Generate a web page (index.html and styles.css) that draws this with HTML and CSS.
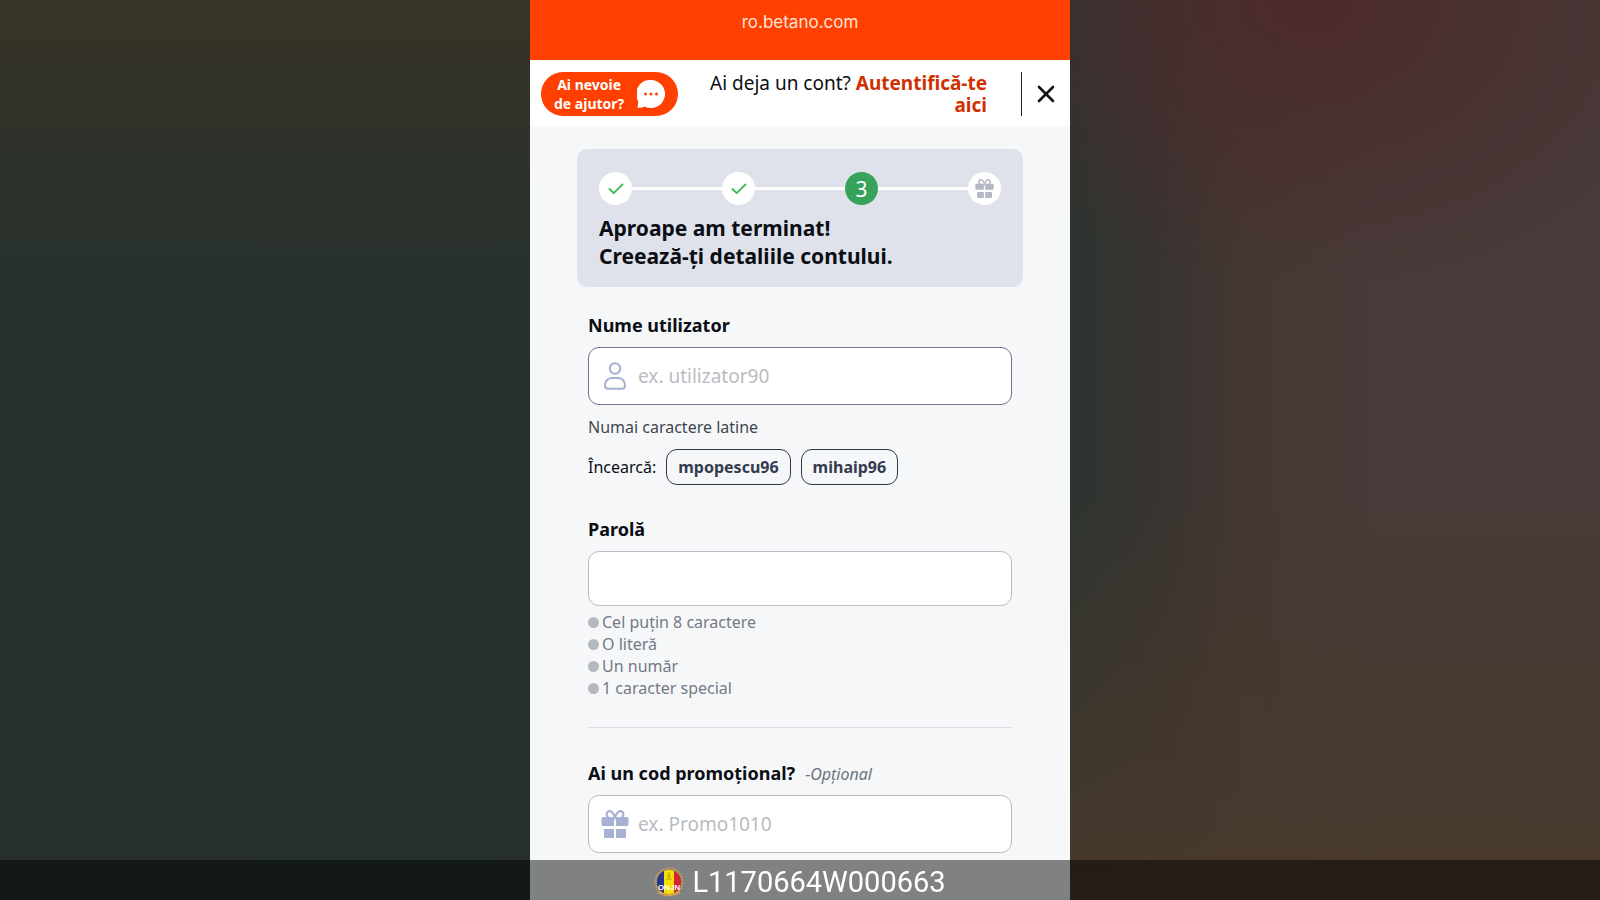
FILE: index.html
```html
<!DOCTYPE html>
<html lang="ro">
<head>
<meta charset="utf-8">
<meta name="viewport" content="width=device-width, initial-scale=1">
<title>Creează cont</title>
<link rel="stylesheet" href="styles.css">
</head>
<body>
<svg class="sprite" aria-hidden="true">
  <symbol id="gift" viewBox="0 0 28 28">
    <path d="M7 7.500C3.500 2.500 8-.500 11 2.200c1.300 1.200 2.400 3 3 5 .6-2 1.700-3.800 3-5C20-.500 24.500 2.500 21 7.500" fill="none" stroke="currentColor" stroke-width="2.200"/>
    <path d="M2 7h11v9H2a1.500 1.500 0 0 1-1.500-1.500v-6A1.500 1.500 0 0 1 2 7zM15 7h11a1.500 1.500 0 0 1 1.500 1.500v6A1.500 1.500 0 0 1 26 16H15zM3 19h10v9H4.500A1.500 1.500 0 0 1 3 26.500zM15 19h10v7.500a1.500 1.500 0 0 1-1.500 1.500H15z" fill="currentColor"/>
  </symbol>
  <symbol id="check" viewBox="0 0 16 12">
    <path d="M1.500 6l4.200 4.200L14.500 1.500" fill="none" stroke="currentColor" stroke-width="1.800" stroke-linecap="round" stroke-linejoin="round"/>
  </symbol>
</svg>
<main class="phone">
  <div class="address">ro.betano.com</div>
  <header class="header">
    <button class="help" type="button">
      <span>Ai nevoie<br>de ajutor?</span>
      <svg class="help-icon" viewBox="0 0 28 28" aria-hidden="true">
        <path d="M14 0a14 14 0 1 1-6.500 26.400C5 27.600 2.500 28 .5 27.800c.3-2 .8-4.300.5-7A14 14 0 0 1 14 0z" fill="#fff"/>
        <g fill="#ff4000"><circle cx="8.500" cy="14" r="1.500"/><circle cx="14" cy="14" r="1.500"/><circle cx="19.500" cy="14" r="1.500"/></g>
      </svg>
    </button>
    <p class="login">Ai deja un cont? <a href="#">Autentifică-te aici</a></p>
    <button class="close" type="button" aria-label="Închide">
      <svg viewBox="0 0 18 18" aria-hidden="true"><path d="M2 2l14 14M16 2L2 16" stroke="#111" stroke-width="2.600" stroke-linecap="round"/></svg>
    </button>
  </header>
  <section class="progress">
    <ol class="steps">
      <li class="step"><svg class="check"><use href="#check"/></svg></li>
      <li class="step"><svg class="check"><use href="#check"/></svg></li>
      <li class="step step-current">3</li>
      <li class="step"><svg class="step-gift"><use href="#gift"/></svg></li>
    </ol>
    <h1 class="title">Aproape am terminat!<br>Creează-ți detaliile contului.</h1>
  </section>
  <form class="form">
    <div class="field">
      <label class="label" for="user">Nume utilizator</label>
      <div class="box box-focus">
        <svg class="icon" viewBox="0 0 28 28" aria-hidden="true">
          <g fill="none" stroke="currentColor" stroke-width="2"><circle cx="14" cy="6.500" r="5.200"/><path d="M10.500 16h7c4 0 6.500 3.500 6.500 7.500 0 2-1 3.300-3 3.300H7c-2 0-3-1.300-3-3.300 0-4 2.500-7.500 6.500-7.500z"/></g>
        </svg>
        <input id="user" type="text" placeholder="ex. utilizator90">
      </div>
      <p class="hint">Numai caractere latine</p>
      <div class="suggestions">
        <span>Încearcă:</span>
        <button class="chip" type="button">mpopescu96</button>
        <button class="chip" type="button">mihaip96</button>
      </div>
    </div>
    <div class="field field-password">
      <label class="label" for="pass">Parolă</label>
      <div class="box box-plain"><input id="pass" type="password"></div>
      <ul class="rules">
        <li>Cel puțin 8 caractere</li>
        <li>O literă</li>
        <li>Un număr</li>
        <li>1 caracter special</li>
      </ul>
    </div>
    <div class="field field-promo">
      <div class="label-row">
        <label class="label" for="promo">Ai un cod promoțional?</label>
        <em class="optional">-Opțional</em>
      </div>
      <div class="box">
        <svg class="icon" aria-hidden="true"><use href="#gift"/></svg>
        <input id="promo" type="text" placeholder="ex. Promo1010">
      </div>
    </div>
  </form>
</main>
<footer class="license">
  <svg class="seal" viewBox="0 0 30 30" aria-hidden="true">
    <defs><clipPath id="disc"><circle cx="15" cy="15" r="12"/></clipPath></defs>
    <circle cx="15" cy="15" r="13.500" fill="none" stroke="#c89a4a" stroke-width="2" stroke-dasharray="2 1"/>
    <g clip-path="url(#disc)"><path fill="#24358c" d="M0 0h10v30H0z"/><path fill="#f6e000" d="M10 0h10v30H10z"/><path fill="#d8232e" d="M20 0h10v30H20z"/></g>
    <path d="M15 5v7M12.500 12h5M13 9h4" stroke="#b09a10"/>
    <path d="M4 25q11 6 22 0" fill="none" stroke="#d3a452" stroke-width="2"/>
    <text class="seal-text" x="15" y="23" text-anchor="middle">ONJN</text>
  </svg>
  <span>L1170664W000663</span>
</footer>
</body>
</html>
```
FILE: styles.css
```css
* { box-sizing: border-box; margin: 0; }
body {
  height: 100vh;
  overflow: hidden;
  display: flex;
  justify-content: center;
  font-family: "Noto Sans", sans-serif;
  color: #0b0e14;
  background:
    linear-gradient(#383327, #2c322b 20%, #26302e 38%, #262f2e) 0 0 / 50% 100% no-repeat,
    radial-gradient(ellipse 24% 32% at 82% 0%, #4c292c, transparent),
    linear-gradient(transparent 55%, #48392b) 0 0 / 100% 100% no-repeat,
    linear-gradient(90deg, #2e3430 67%, #393430 73%, #443834 78%, #473a38 86%, #473a38);
}
.sprite { position: absolute; width: 0; height: 0; }
button, input { font: inherit; color: inherit; }
.phone { width: 100%; max-width: 540px; background: #f5f7f9; }
.address {
  height: 60px;
  padding-top: 11px;
  background: #ff4000;
  color: #ffe3d6;
  font: 400 17px/23px Inter, sans-serif;
  text-align: center;
}
.header {
  display: flex;
  align-items: flex-start;
  padding: 12px 15px 10px 11px;
  background: #fff;
}
.help {
  display: flex;
  align-items: center;
  justify-content: space-between;
  width: 137px;
  height: 44px;
  padding: 0 13px;
  border: 0;
  border-radius: 22px;
  background: #ff4000;
  color: #fff;
  font-size: 14px;
  font-weight: 700;
  line-height: 19px;
}
.help-icon { width: 28px; height: 28px; }
.login {
  flex: 1;
  padding-right: 34px;
  font-size: 19px;
  line-height: 22px;
  text-align: right;
}
.login a { color: #d03000; font-weight: 700; text-decoration: none; }
.close {
  display: flex;
  align-items: center;
  justify-content: flex-end;
  width: 34px;
  height: 44px;
  padding: 0;
  border: 0;
  border-left: 1px solid #222;
  background: none;
}
.close svg { width: 18px; height: 18px; }
.progress {
  margin: 23px 47px 0;
  padding: 23px 22px 17px;
  border-radius: 10px;
  background: #dfe2ea;
}
.steps {
  display: flex;
  justify-content: space-between;
  padding: 0;
  list-style: none;
  background: linear-gradient(#fff, #fff) center / 100% 3px no-repeat;
}
.step {
  display: flex;
  align-items: center;
  justify-content: center;
  width: 33px;
  height: 33px;
  border-radius: 50%;
  background: #fff;
}
.step-current { background: #36a25a; color: #fff; font-size: 21px; }
.check { width: 16px; height: 12px; color: #3fb950; }
.step-gift { width: 19px; height: 19px; color: #b5b8c3; }
.title { margin-top: 9px; font-size: 21px; line-height: 28px; }
.form { padding: 25px 58px 0; }
.label { display: block; font-size: 18px; font-weight: 700; line-height: 26px; }
.box {
  display: flex;
  align-items: center;
  gap: 9px;
  height: 58px;
  margin-top: 9px;
  padding: 0 12px;
  border: 1px solid #b9bbc0;
  border-radius: 11px;
  background: #fff;
}
.box-focus { border-color: #71768c; }
.box-plain { height: 55px; }
.box input { flex: 1; min-width: 0; border: 0; outline: 0; background: none; padding: 0; font-size: 19px; }
.box input::placeholder { color: #b9bcc2; opacity: 1; }
.icon { width: 28px; height: 28px; color: #a6b2d3; }
.hint { margin-top: 11px; font-size: 16px; line-height: 22px; color: #42464d; }
.suggestions { display: flex; align-items: center; gap: 10px; margin-top: 11px; font-size: 16px; }
.chip {
  height: 36px;
  padding: 0 11px;
  border: 1px solid #343946;
  border-radius: 11px;
  background: none;
  color: #343b4e;
  font-weight: 700;
}
.field-password { margin-top: 31px; padding-bottom: 28px; border-bottom: 1px solid #dadde1; }
.rules { margin-top: 5px; padding: 0; list-style: none; font-size: 16px; line-height: 22px; color: #747a85; }
.rules li { display: flex; align-items: center; gap: 3px; }
.rules li::before { content: ""; width: 11px; height: 11px; border-radius: 50%; background: #b5b8c1; }
.field-promo { margin-top: 32px; }
.label-row { display: flex; align-items: baseline; gap: 10px; }
.optional { font-size: 16px; color: #6c727d; }
.license {
  position: fixed;
  inset: auto 0 0;
  display: flex;
  align-items: center;
  justify-content: center;
  gap: 8px;
  height: 40px;
  padding-top: 4px;
  background: rgba(0, 0, 0, .48);
  color: #fff;
  font: 29px/36px Roboto, sans-serif;
}
.seal { width: 30px; height: 30px; }
.seal-text { font: 700 8px "Liberation Sans", sans-serif; fill: #fff; }
```
